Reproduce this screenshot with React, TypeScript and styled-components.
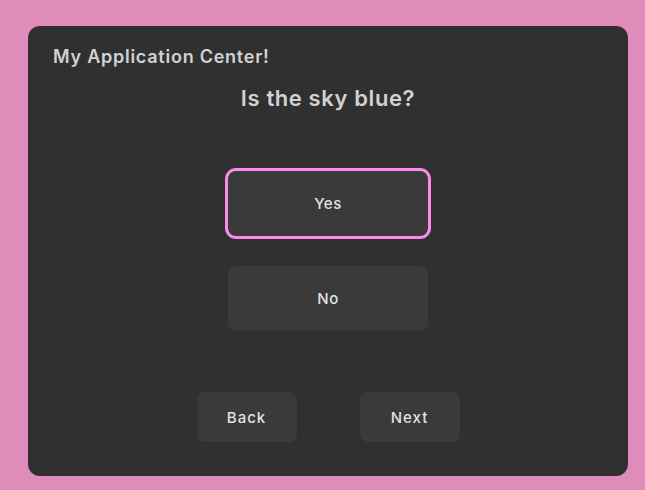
import styled, { createGlobalStyle } from "styled-components";
import { useState } from "react";

const GlobalStyle = createGlobalStyle`
  html, body {
    margin: 0;
    padding: 0;
    background: #e08cba;
    font-family: Inter, "Noto Sans", sans-serif;
  }
`;

const Page = styled.div`
  width: 645px;
  height: 490px;
  box-sizing: border-box;
  padding: 26px 17px 14px 28px;
`;

const Panel = styled.div`
  width: 600px;
  height: 450px;
  box-sizing: border-box;
  background: #303030;
  border-radius: 12px;
  padding: 19px 25px 0;
  display: flex;
  flex-direction: column;
`;

const Title = styled.div`
  font-size: 18px;
  line-height: 24px;
  font-weight: 600;
  letter-spacing: 0.75px;
  color: #d2d2d2;
`;

const Question = styled.div`
  margin-top: 14px;
  text-align: center;
  font-size: 22px;
  line-height: 30px;
  font-weight: 600;
  letter-spacing: 0.6px;
  color: #d2d2d2;
`;

const Choices = styled.div`
  margin-top: 58px;
  display: flex;
  flex-direction: column;
  align-items: center;
  gap: 30px;
`;

const Choice = styled.button<{ $selected: boolean }>`
  width: 200px;
  height: 65px;
  border: none;
  border-radius: 8px;
  background: #3a3a3a;
  color: #e2e2e2;
  font-family: inherit;
  font-size: 15px;
  font-weight: 450;
  letter-spacing: 0.5px;
  cursor: pointer;
  outline: ${(p) => (p.$selected ? "3px solid #fb8aea" : "none")};
  outline-offset: 0;
`;

const Nav = styled.div`
  margin-top: 61px;
  display: flex;
  justify-content: center;
  gap: 63px;
`;

const NavButton = styled.button`
  width: 100px;
  height: 50px;
  border: none;
  border-radius: 8px;
  background: #3a3a3a;
  color: #e2e2e2;
  font-family: inherit;
  font-size: 15px;
  font-weight: 450;
  letter-spacing: 1px;
  cursor: pointer;
`;

const App = () => {
  const [answer, setAnswer] = useState("Yes");

  return (
    <Page>
      <GlobalStyle />
      <Panel>
        <Title>My Application Center!</Title>
        <Question>Is the sky blue?</Question>
        <Choices>
          {["Yes", "No"].map((option) => (
            <Choice
              key={option}
              $selected={answer === option}
              onClick={() => setAnswer(option)}
            >
              {option}
            </Choice>
          ))}
        </Choices>
        <Nav>
          <NavButton>Back</NavButton>
          <NavButton>Next</NavButton>
        </Nav>
      </Panel>
    </Page>
  );
};

export default App;
